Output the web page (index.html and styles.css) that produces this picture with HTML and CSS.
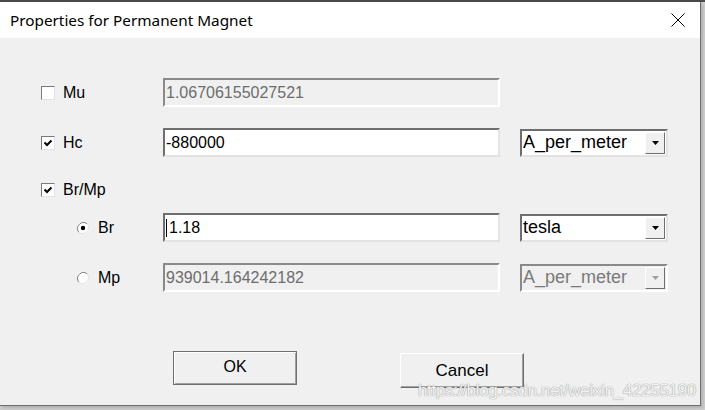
FILE: index.html
```html
<!DOCTYPE html>
<html lang="en">
    <head>
        <meta charset="UTF-8">
        <title>Properties for Permanent Magnet</title>
        <link rel="stylesheet" href="styles.css">
    </head>
    <body>
        <div class="dialog">
            <!-- Title bar -->
            <div class="titlebar">
                <span class="title">Properties for Permanent Magnet</span>
                <svg class="close" width="14" height="14" viewBox="0 0 14 14">
                    <path d="M0.5 0.5 L13.5 13.5 M13.5 0.5 L0.5 13.5" stroke="#000" stroke-width="1" fill="none"/>
                </svg>
            </div>

            <div class="content">
                <div class="row row-mu">
                    <div class="lead">
                        <span class="check"></span>
                        <span class="label">Mu</span>
                    </div>
                    <div class="field disabled">1.06706155027521</div>
                </div>

                <div class="row row-hc">
                    <div class="lead">
                        <span class="check"><svg width="10" height="10" viewBox="0 0 10 10"><path d="M1.5 4.5 L4 7 L8.5 2.5" stroke="#000" stroke-width="2" fill="none"/></svg></span>
                        <span class="label">Hc</span>
                    </div>
                    <div class="field">-880000</div>
                    <div class="combo">
                        <span class="combo-text">A_per_meter</span>
                        <span class="combo-btn"><svg width="7" height="4" viewBox="0 0 7 4"><path d="M0 0 H7 L3.5 4 Z" fill="#000"/></svg></span>
                    </div>
                </div>

                <div class="row row-brmp">
                    <div class="lead">
                        <span class="check"><svg width="10" height="10" viewBox="0 0 10 10"><path d="M1.5 4.5 L4 7 L8.5 2.5" stroke="#000" stroke-width="2" fill="none"/></svg></span>
                        <span class="label">Br/Mp</span>
                    </div>
                </div>

                <div class="row row-br">
                    <div class="lead sub">
                        <svg class="radio" width="14" height="14" viewBox="0 0 14 14">
                            <circle cx="7" cy="7" r="6" fill="#fff"/>
                            <path d="M2.8 11.2 A6 6 0 0 1 11.2 2.8" stroke="#808080" stroke-width="1" fill="none"/>
                            <path d="M11.2 2.8 A6 6 0 0 1 2.8 11.2" stroke="#e3e3e3" stroke-width="1" fill="none"/>
                            <circle cx="7" cy="7" r="2.2" fill="#000"/>
                        </svg>
                        <span class="label">Br</span>
                    </div>
                    <div class="field"><span class="caret"></span>1.18</div>
                    <div class="combo">
                        <span class="combo-text">tesla</span>
                        <span class="combo-btn"><svg width="7" height="4" viewBox="0 0 7 4"><path d="M0 0 H7 L3.5 4 Z" fill="#000"/></svg></span>
                    </div>
                </div>

                <div class="row row-mp">
                    <div class="lead sub">
                        <svg class="radio" width="14" height="14" viewBox="0 0 14 14">
                            <circle cx="7" cy="7" r="6" fill="#fff"/>
                            <path d="M2.8 11.2 A6 6 0 0 1 11.2 2.8" stroke="#808080" stroke-width="1" fill="none"/>
                            <path d="M11.2 2.8 A6 6 0 0 1 2.8 11.2" stroke="#e3e3e3" stroke-width="1" fill="none"/>
                        </svg>
                        <span class="label">Mp</span>
                    </div>
                    <div class="field disabled">939014.164242182</div>
                    <div class="combo disabled">
                        <span class="combo-text">A_per_meter</span>
                        <span class="combo-btn"><svg width="7" height="4" viewBox="0 0 7 4"><path d="M0 0 H7 L3.5 4 Z" fill="#a0a0a0"/></svg></span>
                    </div>
                </div>

                <div class="buttons">
                    <div class="btn btn-ok">OK</div>
                    <div class="btn btn-cancel">Cancel</div>
                </div>

                <div class="watermark">https://blog.csdn.net/weixin_42255190</div>
            </div>
        </div>
    </body>
</html>
```

FILE: styles.css
```css
/* dialog */
body {
    margin: 0;
    background: linear-gradient(#4a4a4a 0, #4a4a4a 2px, #cfcfcf 2px);
    font-family: "Liberation Sans", Arial, sans-serif;
    width: 705px;
    height: 410px;
    overflow: hidden;
}
.dialog {
    margin-top: 2px;
    width: 700px;
    height: 403px;
    border-right: 1px solid #6e6e6e;
    border-bottom: 1px solid #6e6e6e;
    background-color: #f0f0f0;
    box-shadow: 2px 2px 3px rgba(0, 0, 0, 0.15);
}
.titlebar {
    height: 36px;
    background-color: #fff;
    display: flex;
    align-items: center;
    justify-content: space-between;
    padding: 0 15px 0 10px;
}
.title {
    font-family: "Noto Sans", sans-serif;
    font-size: 15.3px;
    color: #000;
    margin-top: -1px;
}
.close {
    margin-top: -1px;
}
.content {
    position: relative;
    height: 367px;
    padding-top: 40px;
    box-sizing: border-box;
}
.row {
    display: flex;
    align-items: center;
    height: 29px;
}
.row-hc { margin-top: 21px; }
.row-brmp { margin-top: 18px; }
.row-br { margin-top: 9px; }
.row-mp { margin-top: 21px; }

.lead {
    width: 163px;
    display: flex;
    align-items: center;
    padding-left: 41px;
    box-sizing: border-box;
}
.lead.sub {
    padding-left: 76px;
}
.label {
    font-size: 16px;
    color: #000;
    margin-left: 8px;
}
.check {
    width: 14px;
    height: 14px;
    box-sizing: border-box;
    background-color: #fff;
    border: 1px solid;
    border-color: #7a7a7a #e3e3e3 #e3e3e3 #7a7a7a;
    display: flex;
    align-items: center;
    justify-content: center;
}
.radio {
    display: block;
}
.field {
    width: 337px;
    height: 29px;
    box-sizing: border-box;
    background-color: #fff;
    border: 2px solid;
    border-color: #6e6e6e #e3e3e3 #e3e3e3 #6e6e6e;
    font-size: 16px;
    line-height: 25px;
    padding-left: 1px;
    color: #000;
    display: flex;
    align-items: center;
}
.field.disabled {
    background-color: #f0f0f0;
    color: #6d6d6d;
    border-color: #8a8a8a #ffffff #ffffff #8a8a8a;
}
.caret {
    width: 1px;
    height: 18px;
    background-color: #000;
    margin-right: 2px;
}
.combo {
    width: 148px;
    height: 28px;
    margin-left: 20px;
    box-sizing: border-box;
    background-color: #fff;
    border: 2px solid;
    border-color: #6e6e6e #e3e3e3 #e3e3e3 #6e6e6e;
    display: flex;
    align-items: center;
    justify-content: space-between;
    padding: 0 1px 0 1px;
}
.combo-text {
    font-size: 18px;
    color: #000;
}
.combo.disabled {
    background-color: #f0f0f0;
    border-color: #8a8a8a #ffffff #ffffff #8a8a8a;
}
.combo.disabled .combo-text {
    color: #7a7a7a;
}
.combo-btn {
    width: 20px;
    height: 22px;
    box-sizing: border-box;
    background-color: #f0f0f0;
    border: 1px solid;
    border-color: #ffffff #6e6e6e #6e6e6e #ffffff;
    display: flex;
    align-items: center;
    justify-content: center;
}
.buttons {
    display: flex;
    align-items: flex-start;
    padding-left: 173px;
    margin-top: 59px;
}
.btn {
    width: 124px;
    height: 34px;
    box-sizing: border-box;
    display: flex;
    align-items: center;
    justify-content: center;
    font-size: 16px;
    color: #000;
    background-color: #f0f0f0;
}
.btn-ok {
    border: 1px solid #6e6e6e;
    box-shadow: inset 1px 1px 0 #fff, inset -1px -1px 0 #a0a0a0;
    padding-bottom: 2px;
}
.btn-cancel {
    margin-left: 103px;
    margin-top: 2px;
    height: 35px;
    font-size: 17px;
    border: 1px solid;
    border-color: #ffffff #6e6e6e #6e6e6e #ffffff;
    box-shadow: inset -1px -1px 0 #a0a0a0;
}
.watermark {
    position: absolute;
    right: 4px;
    bottom: 4px;
    font-size: 17px;
    color: rgba(255, 255, 255, 0.9);
    text-shadow: 0 0 1px #9a9a9a, 0 0 1px #9a9a9a;
    letter-spacing: -0.3px;
}
```
